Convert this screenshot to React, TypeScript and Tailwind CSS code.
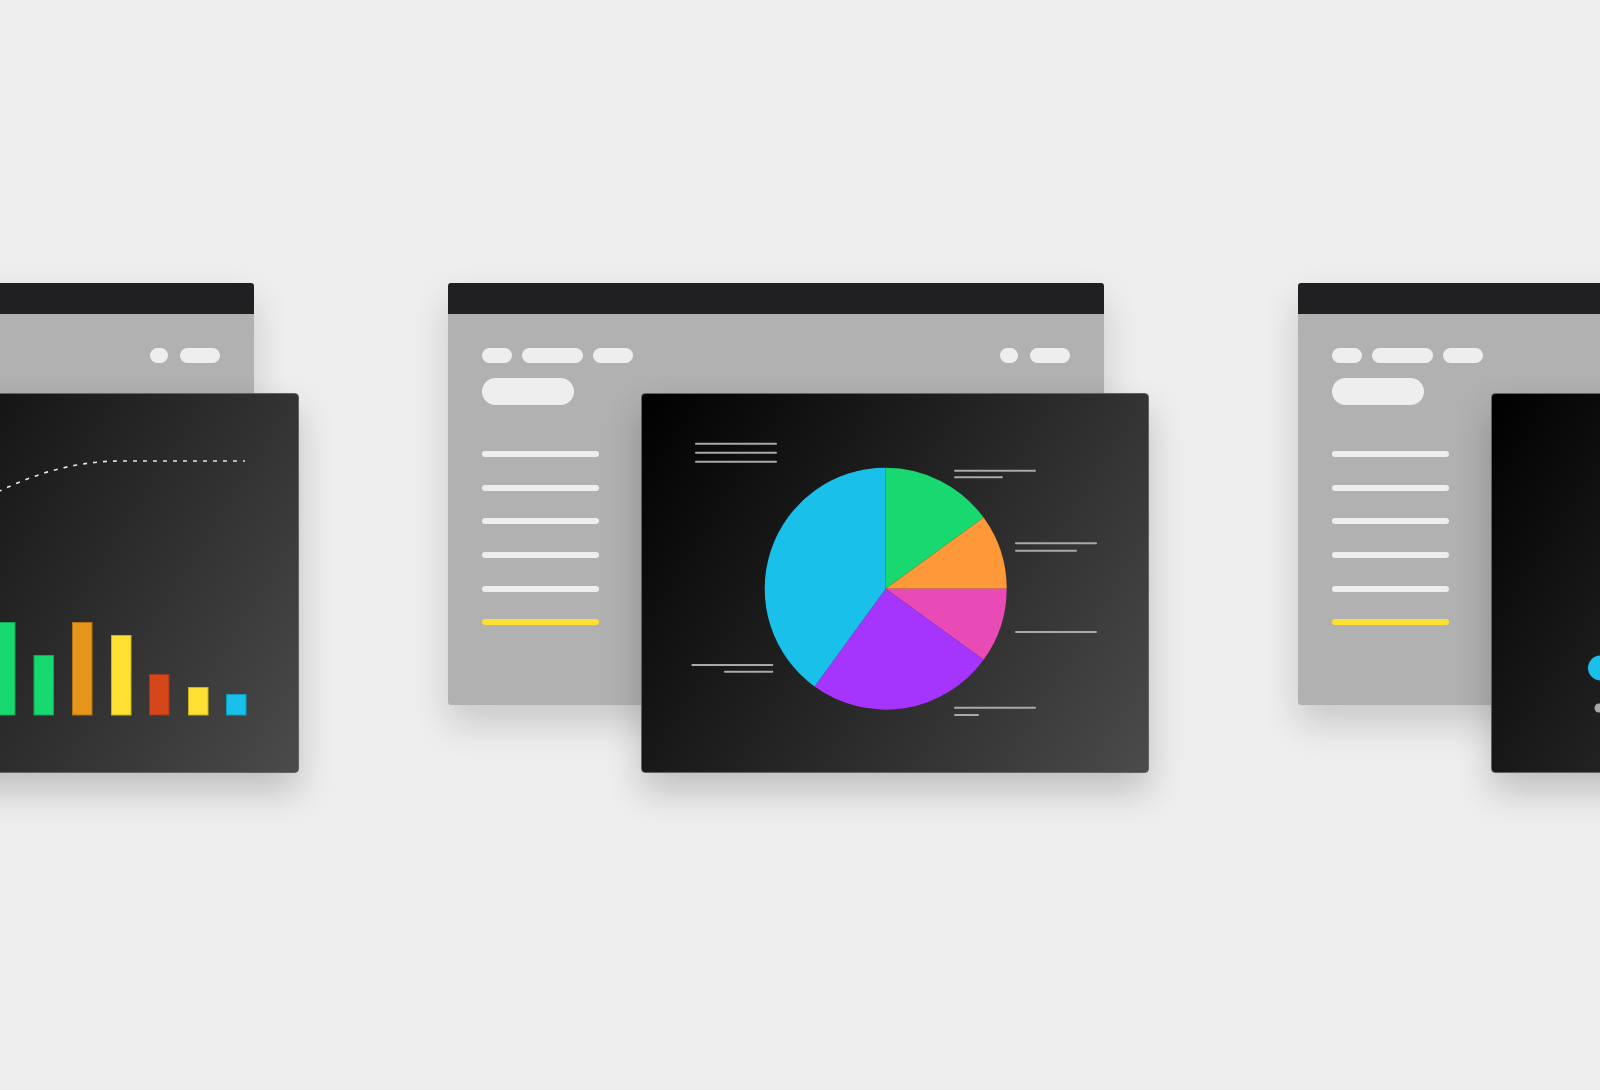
import React from "react";

const PILL = "h-[15px] rounded-full bg-[#eeeeee]";

function BackWindow() {
  return (
    <div className="flex h-[422px] w-[656px] flex-col overflow-hidden rounded-[3px] shadow-[0_18px_36px_rgba(0,0,0,0.16)]">
      <div className="h-[31px] shrink-0 bg-[#202022]" />
      <div className="flex flex-1 flex-col bg-[#b1b1b1] px-[34px] pt-[34px]">
        <div className="flex items-center justify-between">
          <div className="flex gap-[10px]">
            <span className={`${PILL} w-[30px]`} />
            <span className={`${PILL} w-[61px]`} />
            <span className={`${PILL} w-[40px]`} />
          </div>
          <div className="flex gap-[12px]">
            <span className={`${PILL} w-[18px]`} />
            <span className={`${PILL} w-[40px]`} />
          </div>
        </div>
        <span className="mt-[15px] h-[27px] w-[92px] rounded-full bg-[#eeeeee]" />
        <div className="mt-[46px] flex flex-col gap-[27.7px]">
          <span className="h-[6px] w-[117px] rounded-full bg-[#eeeeee]" />
          <span className="h-[6px] w-[117px] rounded-full bg-[#eeeeee]" />
          <span className="h-[6px] w-[117px] rounded-full bg-[#eeeeee]" />
          <span className="h-[6px] w-[117px] rounded-full bg-[#eeeeee]" />
          <span className="h-[6px] w-[117px] rounded-full bg-[#eeeeee]" />
          <span className="h-[6px] w-[117px] rounded-full bg-[#fde032]" />
        </div>
      </div>
    </div>
  );
}

function BarChart() {
  const bars = [
    { x: 88, top: 250, fill: "#19c0e9", stroke: "#139bbb" },
    { x: 127, top: 210, fill: "#fde032", stroke: "#c9b026" },
    { x: 165, top: 240, fill: "#e5961a", stroke: "#b37313" },
    { x: 204, top: 229, fill: "#17d96f", stroke: "#12a957" },
    { x: 242.5, top: 262, fill: "#17d96f", stroke: "#12a957" },
    { x: 281, top: 229, fill: "#e5961a", stroke: "#b37313" },
    { x: 320, top: 242, fill: "#fde032", stroke: "#c9b026" },
    { x: 358, top: 281, fill: "#d5461a", stroke: "#a53613" },
    { x: 397, top: 294, fill: "#fde032", stroke: "#c9b026" },
    { x: 435, top: 301, fill: "#19c0e9", stroke: "#139bbb" },
  ];
  return (
    <svg width="508" height="380" viewBox="0 0 508 380" className="block">
      <path
        d="M 40 240 Q 185 68 330 68 L 454 68"
        fill="none"
        stroke="#e6e6e6"
        strokeWidth="1.6"
        strokeDasharray="4 6"
      />
      {bars.map((b, i) => (
        <rect
          key={i}
          x={b.x + 0.5}
          y={b.top + 0.5}
          width={19.5}
          height={322 - b.top - 0.5}
          fill={b.fill}
          stroke={b.stroke}
          strokeWidth="1"
        />
      ))}
    </svg>
  );
}

function PieChart() {
  const cx = 244.7;
  const cy = 195.7;
  const r = 121;
  const pt = (deg: number) => {
    const a = (deg * Math.PI) / 180;
    return [cx + r * Math.sin(a), cy - r * Math.cos(a)];
  };
  const slice = (a0: number, a1: number) => {
    const [x0, y0] = pt(a0);
    const [x1, y1] = pt(a1);
    const large = a1 - a0 > 180 ? 1 : 0;
    return `M ${cx} ${cy} L ${x0} ${y0} A ${r} ${r} 0 ${large} 1 ${x1} ${y1} Z`;
  };
  const slices = [
    { a0: 0, a1: 54, c: "#17d96f" },
    { a0: 54, a1: 90, c: "#fe9838" },
    { a0: 90, a1: 126, c: "#e84bb5" },
    { a0: 126, a1: 216, c: "#a535fd" },
    { a0: 216, a1: 360, c: "#19c0e9" },
  ];
  const lines: [number, number, number][] = [
    [54, 136, 50.7],
    [54, 136, 59.7],
    [54, 136, 68.7],
    [313, 395, 77.7],
    [313, 362, 84.3],
    [374, 456, 150.3],
    [374, 436, 157.7],
    [374, 456, 239],
    [313, 395, 314.7],
    [313, 338, 322],
    [50.3, 132.3, 272],
    [83, 132.3, 278.7],
  ];
  return (
    <svg width="508" height="380" viewBox="0 0 508 380" className="block">
      {slices.map((s, i) => (
        <path key={i} d={slice(s.a0, s.a1)} fill={s.c} />
      ))}
      {lines.map(([x0, x1, y], i) => (
        <line
          key={i}
          x1={x0 + 1}
          x2={x1 - 1}
          y1={y}
          y2={y}
          stroke="#a9a9a9"
          strokeWidth="2"
          strokeLinecap="round"
        />
      ))}
    </svg>
  );
}

function DotChart() {
  return (
    <svg width="508" height="380" viewBox="0 0 508 380" className="block">
      <circle cx="109.5" cy="275" r="12.5" fill="#19c0e9" />
      <line x1="108" y1="315" x2="170" y2="315" stroke="#a9a9a9" strokeWidth="9" strokeLinecap="round" />
    </svg>
  );
}

function Composition({ chart }: { chart: React.ReactNode }) {
  return (
    <div className="relative h-[490px] w-[701px] shrink-0">
      <BackWindow />
      <div className="absolute left-[193px] top-[110px] h-[380px] w-[508px] overflow-hidden rounded-[4px] border border-[#626262] bg-linear-[122deg] from-[#000000] to-[#4b4b4b] shadow-[0_18px_36px_rgba(0,0,0,0.2)]">
        <div className="-m-px">{chart}</div>
      </div>
    </div>
  );
}

export default function App() {
  return (
    <div className="h-[1090px] w-[1600px] overflow-hidden bg-[#eeeeee]">
      <div className="ml-[-402px] flex gap-[149px] pt-[283px]">
        <Composition chart={<BarChart />} />
        <Composition chart={<PieChart />} />
        <Composition chart={<DotChart />} />
      </div>
    </div>
  );
}
